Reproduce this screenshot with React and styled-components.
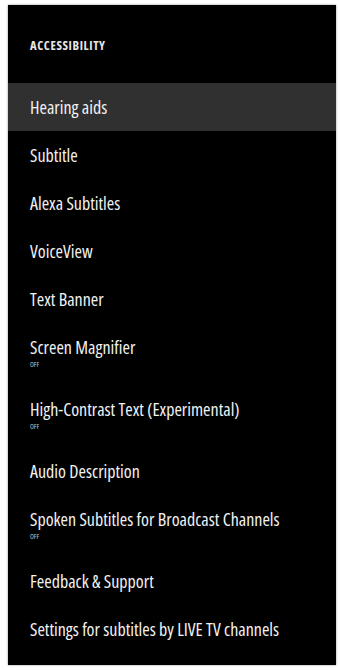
import React from "react";
import styled, { createGlobalStyle } from "styled-components";

const GlobalStyle = createGlobalStyle`
  html, body {
    margin: 0;
    padding: 0;
    background: #fff;
  }
`;

const narrow = `"Open Sans", "DejaVu Sans Condensed", sans-serif`;

const Page = styled.div`
  width: 340px;
  height: 670px;
  padding: 5px 4px 5px 8px;
  box-sizing: border-box;
`;

const Panel = styled.div`
  height: 660px;
  background: #000;
  box-shadow: 0 0 2px rgba(0, 0, 0, 0.45);
  display: flex;
  flex-direction: column;
  font-family: ${narrow};
  font-stretch: 75%;
  color: #f2f2f2;
  overflow: hidden;
`;

const Header = styled.div`
  flex-shrink: 0;
  height: 78px;
  padding: 34px 22px 0;
  box-sizing: border-box;
  font-size: 12.5px;
  line-height: 14px;
  font-weight: 700;
  letter-spacing: 0.6px;
  color: #e8e8e8;
`;

const List = styled.ul`
  list-style: none;
  margin: 0;
  padding: 0;
`;

const Row = styled.li`
  padding: 13px 22px;
  background: ${(p) => (p.$active ? "#303030" : "transparent")};
  display: flex;
  flex-direction: column;
`;

const Title = styled.span`
  display: block;
  font-size: 18px;
  line-height: 22px;
  white-space: nowrap;
`;

const Sub = styled.span`
  display: block;
  margin-top: 2px;
  padding-bottom: 2px;
  font-size: 7px;
  line-height: 10px;
  color: #c4c4c4;
`;

const items = [
  { title: "Hearing aids", active: true },
  { title: "Subtitle" },
  { title: "Alexa Subtitles" },
  { title: "VoiceView" },
  { title: "Text Banner" },
  { title: "Screen Magnifier", sub: "OFF" },
  { title: "High-Contrast Text (Experimental)", sub: "OFF" },
  { title: "Audio Description" },
  { title: "Spoken Subtitles for Broadcast Channels", sub: "OFF" },
  { title: "Feedback & Support" },
  { title: "Settings for subtitles by LIVE TV channels" },
];

export default function App() {
  return (
    <>
      <GlobalStyle />
      <Page>
        <Panel>
          <Header>ACCESSIBILITY</Header>
          <List>
            {items.map((it) => (
              <Row key={it.title} $active={it.active}>
                <Title>{it.title}</Title>
                {it.sub && <Sub>{it.sub}</Sub>}
              </Row>
            ))}
          </List>
        </Panel>
      </Page>
    </>
  );
}
